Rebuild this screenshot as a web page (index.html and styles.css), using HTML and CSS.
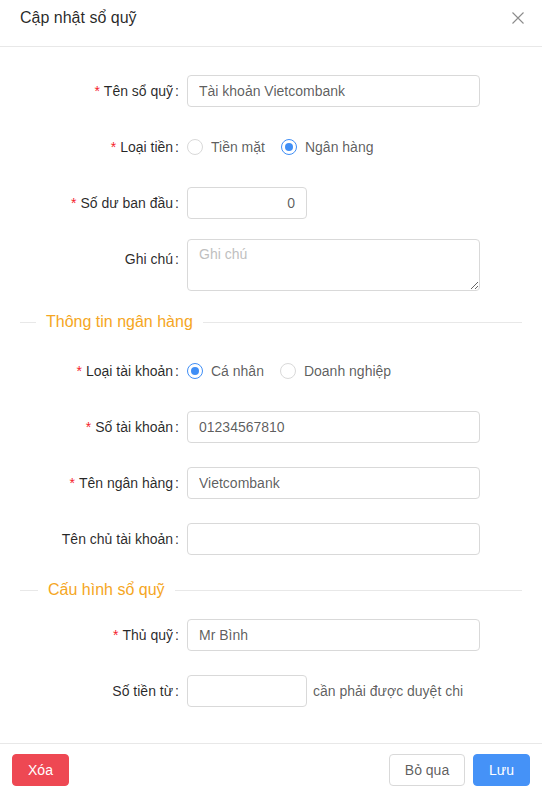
FILE: index.html
```html
<!DOCTYPE html>
<html lang="vi">
<head>
<meta charset="utf-8">
<title>Cập nhật sổ quỹ</title>
<link rel="stylesheet" href="styles.css">
</head>
<body>
<div class="modal">
  <div class="modal-header">
    <div class="modal-title">Cập nhật sổ quỹ</div>
    <button class="close" aria-label="Đóng">
      <svg width="12" height="12" viewBox="0 0 12 12"><path d="M0.5 0.5 L11.5 11.5 M11.5 0.5 L0.5 11.5" stroke="#8c8c8c" stroke-width="1.1" fill="none"/></svg>
    </button>
  </div>
  <div class="modal-body">
    <div class="form-row first">
      <label class="label"><span class="req">*</span>Tên sổ quỹ<span class="colon">:</span></label>
      <div class="control"><input class="input" type="text" value="Tài khoản Vietcombank"></div>
    </div>
    <div class="form-row">
      <label class="label"><span class="req">*</span>Loại tiền<span class="colon">:</span></label>
      <div class="control radios">
        <span class="radio"><span class="dot"></span><span class="radio-text">Tiền mặt</span></span>
        <span class="radio checked"><span class="dot"></span><span class="radio-text">Ngân hàng</span></span>
      </div>
    </div>
    <div class="form-row">
      <label class="label"><span class="req">*</span>Số dư ban đầu<span class="colon">:</span></label>
      <div class="control"><input class="input small right" type="text" value="0"></div>
    </div>
    <div class="form-row tall">
      <label class="label">Ghi chú<span class="colon">:</span></label>
      <div class="control"><textarea class="textarea" placeholder="Ghi chú"></textarea></div>
    </div>

    <div class="divider div-bank"><span class="line before"></span><span class="divider-text">Thông tin ngân hàng</span><span class="line after"></span></div>

    <div class="form-row">
      <label class="label"><span class="req">*</span>Loại tài khoản<span class="colon">:</span></label>
      <div class="control radios">
        <span class="radio checked"><span class="dot"></span><span class="radio-text">Cá nhân</span></span>
        <span class="radio"><span class="dot"></span><span class="radio-text">Doanh nghiệp</span></span>
      </div>
    </div>
    <div class="form-row">
      <label class="label"><span class="req">*</span>Số tài khoản<span class="colon">:</span></label>
      <div class="control"><input class="input" type="text" value="01234567810"></div>
    </div>
    <div class="form-row">
      <label class="label"><span class="req">*</span>Tên ngân hàng<span class="colon">:</span></label>
      <div class="control"><input class="input" type="text" value="Vietcombank"></div>
    </div>
    <div class="form-row last-in-group">
      <label class="label">Tên chủ tài khoản<span class="colon">:</span></label>
      <div class="control"><input class="input" type="text" value=""></div>
    </div>

    <div class="divider div-config"><span class="line before"></span><span class="divider-text">Cấu hình sổ quỹ</span><span class="line after"></span></div>

    <div class="form-row">
      <label class="label"><span class="req">*</span>Thủ quỹ<span class="colon">:</span></label>
      <div class="control"><input class="input" type="text" value="Mr Bình"></div>
    </div>
    <div class="form-row last">
      <label class="label">Số tiền từ<span class="colon">:</span></label>
      <div class="control inline"><input class="input small" type="text" value=""><span class="suffix">cần phải được duyệt chi</span></div>
    </div>
  </div>
  <div class="modal-footer">
    <button class="btn danger">Xóa</button>
    <div class="footer-right">
      <button class="btn default">Bỏ qua</button>
      <button class="btn primary">Lưu</button>
    </div>
  </div>
</div>
</body>
</html>
```

FILE: styles.css
```css
* { box-sizing: border-box; }
html, body {
  margin: 0;
  padding: 0;
  background: #fff;
  font-family: "Liberation Sans", Arial, sans-serif;
  font-size: 14px;
  color: rgba(0, 0, 0, 0.65);
}
.modal { width: 542px; }
.modal-header {
  height: 47px;
  border-bottom: 1px solid #e8e8e8;
  display: flex;
  justify-content: space-between;
  align-items: flex-start;
  padding: 7px 18px 0 20px;
}
.modal-title {
  font-size: 16px;
  line-height: 22px;
  color: rgba(0, 0, 0, 0.85);
}
.close {
  border: 0;
  background: none;
  padding: 0;
  margin-top: 5px;
  width: 12px;
  height: 12px;
  display: flex;
}
.modal-body { padding: 28px 20px 36px 20px; }
.form-row {
  display: flex;
  align-items: flex-start;
  margin-bottom: 24px;
}
.form-row.tall { margin-bottom: 20px; }
.form-row.last-in-group { margin-bottom: 24px; }
.form-row.last { margin-bottom: 0; }
.label {
  width: 167px;
  flex: none;
  text-align: right;
  line-height: 32px;
  height: 32px;
  color: rgba(0, 0, 0, 0.85);
  white-space: nowrap;
}
.req {
  color: #f5222d;
  margin-right: 4px;
  font-family: SimSun, "Liberation Sans", sans-serif;
  font-size: 14px;
}
.colon { margin: 0 8px 0 2px; }
.control { width: 293px; min-height: 32px; }
.control.inline { display: flex; align-items: center; width: auto; }
.input {
  width: 293px;
  height: 32px;
  border: 1px solid #d9d9d9;
  border-radius: 4px;
  padding: 4px 11px;
  font-family: inherit;
  font-size: 14px;
  color: rgba(0, 0, 0, 0.65);
  background: #fff;
  outline: none;
  display: block;
}
.input.small { width: 120px; }
.input.right { text-align: right; }
.suffix { margin-left: 6px; color: rgba(0, 0, 0, 0.65); }
.textarea {
  width: 293px;
  height: 52px;
  border: 1px solid #d9d9d9;
  border-radius: 4px;
  padding: 4px 11px;
  font-family: inherit;
  font-size: 14px;
  line-height: 1.5;
  color: rgba(0, 0, 0, 0.65);
  display: block;
  margin-top: -4px;
  outline: none;
}
.textarea::placeholder { color: #bfbfbf; }
.radios { display: flex; align-items: center; height: 32px; }
.radio { display: inline-flex; align-items: center; margin-right: 8px; }
.dot {
  width: 16px;
  height: 16px;
  border: 1px solid #d9d9d9;
  border-radius: 50%;
  background: #fff;
  display: inline-flex;
  align-items: center;
  justify-content: center;
}
.radio.checked .dot { border-color: #3f8ef6; }
.radio.checked .dot::after {
  content: "";
  width: 8px;
  height: 8px;
  border-radius: 50%;
  background: #3f8ef6;
}
.radio-text { padding: 0 8px; color: rgba(0, 0, 0, 0.65); }
.divider {
  display: flex;
  align-items: center;
  height: 22px;
}
.divider.div-bank { margin-bottom: 22px; }
.divider.div-config { margin-bottom: 18px; }
.line { height: 1px; background: #e8e8e8; }
.line.before { width: 16px; flex: none; }
.div-config .line.before { width: 18px; }
.line.after { flex: 1; }
.divider-text {
  font-size: 16px;
  line-height: 22px;
  color: #f5a623;
  padding: 0 10px;
  white-space: nowrap;
}
.modal-footer {
  border-top: 1px solid #e8e8e8;
  padding: 10px 12px;
  display: flex;
  justify-content: space-between;
}
.footer-right { display: flex; gap: 8px; }
.btn {
  height: 32px;
  padding: 0;
  border-radius: 4px;
  font-family: inherit;
  font-size: 14px;
  border: 1px solid #d9d9d9;
  background: #fff;
  color: rgba(0, 0, 0, 0.65);
  white-space: nowrap;
  text-align: center;
}
.btn.danger { background: #ee4853; border-color: #ee4853; color: #fff; width: 57px; }
.btn.primary { background: #4592f7; border-color: #4592f7; color: #fff; width: 57px; }
.btn.default { width: 76px; }
```
